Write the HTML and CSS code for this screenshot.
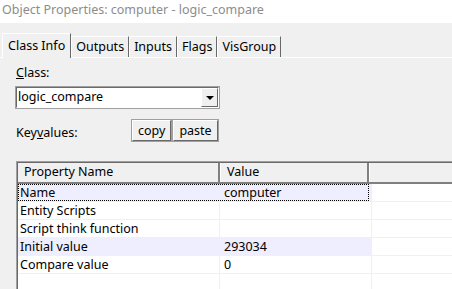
FILE: index.html
```html
<!DOCTYPE html>
<html lang="en">
<head>
    <meta charset="UTF-8">
    <title>Object Properties: computer - logic_compare</title>
    <link rel="stylesheet" href="styles.css">
</head>
<body>
    <div class="titlebar">Object Properties: computer - logic_compare</div>
    <div class="window">
        <div class="tabs">
            <div class="tab active">Class Info</div>
            <div class="tab">Outputs</div>
            <div class="tab">Inputs</div>
            <div class="tab">Flags</div>
            <div class="tab">VisGroup</div>
        </div>
        <div class="panel">
            <div class="field-label"><u>C</u>lass:</div>
            <div class="combo">
                <span class="combo-text">logic_compare</span>
                <span class="combo-btn"><span class="arrow"></span></span>
            </div>
            <div class="kv-row">
                <span class="kv-label">Key<u>v</u>alues:</span>
                <button class="btn">copy</button>
                <button class="btn">paste</button>
            </div>
            <div class="list">
                <div class="list-head">
                    <div class="col col-name">Property Name</div>
                    <div class="col col-value">Value</div>
                    <div class="col col-rest"></div>
                </div>
                <div class="row hl focus">
                    <div class="col col-name">Name</div>
                    <div class="col col-value">computer</div>
                    <div class="col col-rest"></div>
                </div>
                <div class="row">
                    <div class="col col-name">Entity Scripts</div>
                    <div class="col col-value"></div>
                    <div class="col col-rest"></div>
                </div>
                <div class="row">
                    <div class="col col-name">Script think function</div>
                    <div class="col col-value"></div>
                    <div class="col col-rest"></div>
                </div>
                <div class="row hl">
                    <div class="col col-name">Initial value</div>
                    <div class="col col-value">293034</div>
                    <div class="col col-rest"></div>
                </div>
                <div class="row">
                    <div class="col col-name">Compare value</div>
                    <div class="col col-value">0</div>
                    <div class="col col-rest"></div>
                </div>
                <div class="row">
                    <div class="col col-name"></div>
                    <div class="col col-value"></div>
                    <div class="col col-rest"></div>
                </div>
            </div>
        </div>
    </div>
</body>
</html>
```

FILE: styles.css
```css
body {
    margin: 0;
    background-color: #f0f0f0;
    font-family: "Noto Sans", sans-serif;
    font-size: 12.5px;
    color: #000;
    overflow: hidden;
}
.titlebar {
    height: 23px;
    line-height: 20px;
    background: #fff;
    color: #8c8c8c;
    font-size: 12.5px;
    padding-left: 2px;
    white-space: nowrap;
}
.window {
    padding-top: 10px;
}
.tabs {
    display: flex;
    align-items: flex-end;
    padding-left: 2px;
    height: 24px;
}
.tab {
    height: 21px;
    line-height: 20px;
    padding: 0 4px;
    border-top: 1px solid #fff;
    border-left: 1px solid #fff;
    border-right: 1px solid #696969;
    box-sizing: border-box;
}
.tab.active {
    height: 25px;
    padding: 0 5px;
    line-height: 23px;
    margin-bottom: -1px;
    background: #f0f0f0;
    position: relative;
}
.panel {
    border-top: 1px solid #fff;
    padding: 7px 0 0 16px;
}
.field-label {
    height: 15px;
    line-height: 15px;
}
.combo {
    display: flex;
    width: 203px;
    height: 21px;
    margin-top: 7px;
    background: #fff;
    border-top: 1px solid #696969;
    border-left: 1px solid #696969;
    border-right: 1px solid #fff;
    border-bottom: 1px solid #fff;
    box-sizing: border-box;
    outline: 1px solid #a0a0a0;
}
.combo-text {
    flex: 1;
    line-height: 18px;
    padding-left: 1px;
}
.combo-btn {
    width: 17px;
    display: flex;
    align-items: center;
    justify-content: center;
    background: #f0f0f0;
    border-top: 1px solid #fff;
    border-left: 1px solid #fff;
    border-right: 1px solid #696969;
    border-bottom: 1px solid #696969;
    box-sizing: border-box;
}
.arrow {
    width: 0;
    height: 0;
    border-left: 4px solid transparent;
    border-right: 4px solid transparent;
    border-top: 4px solid #000;
}
.kv-row {
    display: flex;
    align-items: center;
    margin-top: 12px;
    height: 21px;
}
.kv-label {
    width: 116px;
    margin-top: 4px;
}
.btn {
    font: inherit;
    height: 21px;
    padding: 0 5px;
    margin-right: 2px;
    background: #f0f0f0;
    border-top: 1px solid #fff;
    border-left: 1px solid #fff;
    border-right: 1px solid #696969;
    border-bottom: 1px solid #696969;
    outline: 1px solid #a0a0a0;
    line-height: 17px;
}
.list {
    margin-top: 20px;
    background: #fff;
    border-left: 1px solid #a0a0a0;
    border-top: 1px solid #a0a0a0;
    box-shadow: inset 1px 1px 0 #696969;
    width: 500px;
    height: 200px;
}
.list-head {
    display: flex;
    height: 19px;
    background: #f0f0f0;
    margin: 1px 0 0 1px;
    border-bottom: 2px solid #808080;
}
.list-head .col {
    border-left: 1px solid #fff;
    border-right: 2px solid #808080;
    line-height: 18px;
    padding-left: 6px;
}
.list-head .col-name {
    border-left: none;
    width: 194px;
}
.list-head .col-value {
    width: 140px;
}
.list-head .col-rest {
    flex: 1;
}
.row {
    display: flex;
    height: 18px;
    margin-left: 1px;
    border-bottom: 1px solid #f0f0f0;
    box-sizing: border-box;
}
.row .col {
    line-height: 17px;
    padding-left: 2px;
    white-space: nowrap;
}
.row .col-name {
    width: 199px;
}
.row .col-value {
    width: 147px;
    border-left: 1px solid #f0f0f0;
    padding-left: 4px;
}
.row .col-rest {
    flex: 1;
    border-left: 1px solid #f0f0f0;
}
.row.hl .col-name,
.row.hl .col-value {
    background: #eeeefe;
}
.row.focus {
    position: relative;
}
.row.focus::after {
    content: "";
    position: absolute;
    left: 0;
    top: 0;
    width: 351px;
    height: 17px;
    border: 1px dotted #000;
    box-sizing: border-box;
}
```
